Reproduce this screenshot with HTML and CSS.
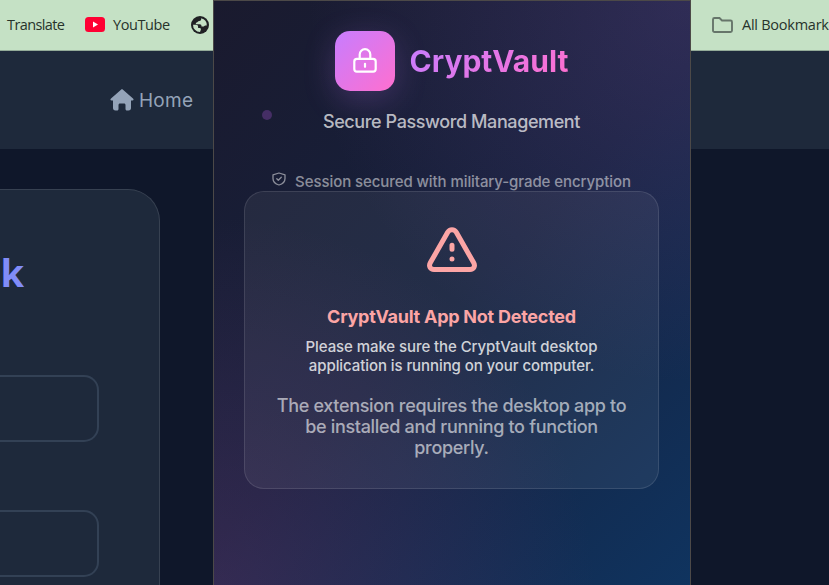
FILE: index.html
```
<!DOCTYPE html>
<html lang="en">
<head>
<meta charset="utf-8">
<title>CryptVault</title>
<link rel="stylesheet" href="styles.css">
</head>
<body>
<header class="bookmarks">
  <span class="translate">Translate</span>
  <span class="bookmark youtube"><svg width="20" height="15" viewBox="0 0 20 15"><rect width="20" height="15" rx="3.5" fill="#ff0033"/><path d="M8 4.5v6l5-3z" fill="#fff"/></svg>YouTube</span>
  <svg class="globe" width="18" height="18" viewBox="0 0 24 24"><circle cx="12" cy="12" r="12" fill="#202124"/><path d="M13.500 3c.5 2-.5 3.500-2.500 3.500S9 8.500 7.500 8.500c-1.500.3-1.500 2.500 0 2.500h4c2 0 2.500 1 2.500 3h2.500c1 0 1.500-1.500 2.500-1.500h2A9.500 9.500 0 0 0 13.500 3zM2.700 11.500h3.800c2 0 3 1 3 3v1.500h2c1.500 0 2 1 1.500 2.500L12 21.400a9.500 9.500 0 0 1-9.300-9.900z" fill="#c5e1c5"/></svg>
  <span class="bookmark all"><svg width="21" height="16" viewBox="0 0 21 16" fill="none" stroke="#66756a" stroke-width="1.900"><path d="M3 1h4.500l2.500 2.500h8.500a1.500 1.500 0 0 1 1.500 1.500v8.500a1.500 1.500 0 0 1-1.500 1.500H2.500A1.500 1.500 0 0 1 1 13.500V2.500A1.500 1.500 0 0 1 2.500 1z"/></svg>All Bookmarks</span>
</header>
<nav class="nav"><a class="home"><svg width="24" height="22" viewBox="0 0 24 22"><path d="M12 .3c.4 0 .7.100 1 .4l10 8.800c1 .9.700 2-.6 2H21v7.500c0 1.500-.8 2.500-2.500 2.500H17c-1 0-1.500-.6-1.500-1.500v-4c0-.9-.5-1.500-1.500-1.500h-4c-1 0-1.500.6-1.500 1.500v4c0 .9-.5 1.500-1.500 1.500H5.500C3.800 21.500 3 20.500 3 19v-7.500H1.600c-1.300 0-1.600-1.100-.6-2L11 .7c.3-.3.600-.4 1-.4z" fill="#94a3b8"/></svg><span>Home</span></a></nav>
<main class="page">
  <section class="form-card">
    <h1 class="form-title">ck</h1>
    <div class="field"></div>
    <div class="field"></div>
  </section>
</main>
<aside class="popup">
  <i class="particle"></i>
  <div class="brand">
    <div class="logo"><svg width="24" height="26" viewBox="0 0 24 26" fill="none" stroke="#fff" stroke-width="2.200"><rect x="1.300" y="10.800" width="21.400" height="12.900" rx="2.600"/><path d="M6.700 10.800V6.500a5.300 5.300 0 0 1 10.600 0v4.300"/><path d="M12 15.800v3" stroke-linecap="round"/></svg></div>
    <h2 class="name">CryptVault</h2>
  </div>
  <p class="tagline">Secure Password Management</p>
  <div class="session"><svg width="14" height="14" viewBox="0 0 14 14" fill="none" stroke="currentColor" stroke-width="1.300" stroke-linejoin="round" stroke-linecap="round"><path d="M7 1 13 2.800v3.700C13 9.500 10.500 12 7 13 3.500 12 1 9.500 1 6.500V2.800z"/><path d="m4.800 6.800 1.500 1.500 3-3"/></svg><span>Session secured with military-grade encryption</span></div>
  <section class="alert">
    <svg class="warning" width="52" height="48" viewBox="0 0 52 48" fill="none" stroke="#fca5a5" stroke-width="5" stroke-linejoin="round"><path d="M21.700 6.300 4.300 36.800C2.500 40 4.200 43.500 8 43.500h36c3.800 0 5.500-3.500 3.700-6.700L30.300 6.300c-2-3.400-6.600-3.400-8.600 0z"/><path d="M26 19.300v4M26 33v.1" stroke-linecap="round"/></svg>
    <h3 class="alert-title">CryptVault App Not Detected</h3>
    <p class="alert-text">Please make sure the CryptVault desktop<br>application is running on your computer.</p>
    <p class="alert-note">The extension requires the desktop app to<br>be installed and running to function<br>properly.</p>
  </section>
</aside>
</body>
</html>
```
FILE: styles.css
```
* { box-sizing: border-box; }
body { margin: 0; height: 585px; overflow: hidden; position: relative; background: #0f172a; font-family: Inter, sans-serif; }
svg { flex: none; display: block; }
h1, h2, h3, p { margin: 0; }
.bookmarks { height: 51px; background: #c5e1c5; border-bottom: 1px solid #93aa98; display: flex; align-items: center; padding: 0 0 1px 7px; font: 14.500px "Open Sans", sans-serif; color: #27332b; white-space: nowrap; letter-spacing: -.6px; }
.translate { flex: none; width: 78px; }
.bookmark { display: flex; align-items: center; flex: none; }
.youtube { gap: 8px; width: 106px; letter-spacing: -.4px; }
.all { gap: 9px; margin-left: 503px; letter-spacing: -.25px; }
.nav { height: 98px; background: #1e293b; padding-left: 110px; display: flex; align-items: center; }
.home { display: flex; align-items: center; gap: 5px; color: #94a3b8; font-size: 19px; letter-spacing: .25px; }
.page { padding-top: 40px; }
.form-card { width: 160px; height: 420px; background: #1e293b; border: 1px solid #374151; border-left: 0; border-radius: 0 32px 0 0; padding: 57px 61px 0 0; overflow: hidden; }
.form-title { color: #818cf8; font: 700 38px/50px "Open Sans", sans-serif; display: flex; justify-content: flex-end; width: 24px; margin-bottom: 78px; }
.field { width: 99px; height: 67px; border: 2px solid #334155; border-left: 0; border-radius: 0 15px 15px 0; margin-bottom: 68px; }
.popup { position: absolute; left: 213px; top: 0; width: 478px; height: 600px; border: 1px solid #4c4948; padding: 30px 31px 30px 30px; color: #fff; text-align: center; background: radial-gradient(circle at 0% 100%, rgba(120,60,120,.32), transparent 50%), radial-gradient(circle at 100% 0%, rgba(120,80,160,.26), transparent 50%), linear-gradient(135deg, #1a1a2e 0%, #16213e 50%, #0f3460 100%); }
.particle { position: absolute; left: 48px; top: 109px; width: 10px; height: 10px; border-radius: 50%; background: #452e65; }
.brand { display: flex; align-items: center; justify-content: center; gap: 15px; height: 60px; }
.logo { width: 60px; height: 60px; border-radius: 15px; display: grid; place-items: center; background: linear-gradient(135deg, #c77dff, #ff6fcf); box-shadow: 0 8px 32px rgba(199,125,255,.22); }
.name { font-size: 30px; line-height: 36px; font-weight: 700; background: linear-gradient(135deg, #c77dff, #ff6fcf); background-clip: text; color: transparent; }
.tagline { font-size: 18px; line-height: 22px; margin-top: 20px; color: rgba(255,255,255,.7); letter-spacing: -.4px; font-weight: 450; }
.session { display: flex; justify-content: center; align-items: flex-start; gap: 9px; margin-top: 39px; height: 19px; color: rgba(255,255,255,.5); font-size: 15px; line-height: 19px; white-space: nowrap; font-weight: 450; letter-spacing: -.08px; }
.alert { height: 298px; border: 1px solid rgba(255,255,255,.11); border-radius: 20px; background: rgba(255,255,255,.06); padding-top: 34px; white-space: nowrap; }
.warning { margin: 0 auto 32px; }
.alert-title { color: #fca5a5; font-size: 18px; line-height: 22px; font-weight: 700; letter-spacing: -.25px; }
.alert-text { font-size: 15px; line-height: 19px; color: rgba(255,255,255,.8); margin-top: 9px; font-weight: 500; letter-spacing: -.08px; }
.alert-note { font-size: 18px; line-height: 21px; color: rgba(255,255,255,.6); margin-top: 20px; font-weight: 450; letter-spacing: -.32px; }
```
